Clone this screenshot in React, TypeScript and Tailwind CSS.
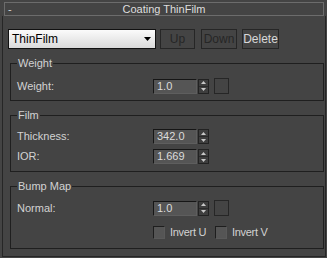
import React from 'react';

const Spinner: React.FC<{ value: string }> = ({ value }) => (
  <div className="flex items-center">
    <div className="h-[15px] w-[44px] border border-[#161616] border-r-[#5e5e5e] border-b-[#5e5e5e] bg-[#555555] pl-[3px] leading-[13px] text-[#dcdcdc]">
      {value}
    </div>
    <div className="ml-[1px] flex h-[15px] w-[11px] flex-col border border-[#222222] bg-[#3e3e3e]">
      <div className="flex flex-1 items-center justify-center border-b border-[#2a2a2a]">
        <svg width="5" height="3" viewBox="0 0 5 3">
          <path d="M0 3 L2.5 0 L5 3 Z" fill="#c8c8c8" />
        </svg>
      </div>
      <div className="flex flex-1 items-center justify-center">
        <svg width="5" height="3" viewBox="0 0 5 3">
          <path d="M0 0 L2.5 3 L5 0 Z" fill="#c8c8c8" />
        </svg>
      </div>
    </div>
  </div>
);

const MapButton: React.FC = () => (
  <div className="ml-[5px] h-[16px] w-[15px] border border-[#262626] bg-[#444444]" />
);

const Check: React.FC<{ label: string; className?: string }> = ({ label, className }) => (
  <div className={`flex items-center ${className ?? ''}`}>
    <div className="h-[13px] w-[12px] border border-[#1e1e1e] border-r-[#5a5a5a] border-b-[#5a5a5a] bg-[#555555]" />
    <span className="ml-[5px] tracking-[-0.3px]">{label}</span>
  </div>
);

const App: React.FC = () => {
  return (
    <div
      className="h-[258px] w-[327px] bg-[#444444] pt-[2px] text-[11px] leading-[13px] text-[#d2d2d2]"
      style={{ fontFamily: '"Liberation Sans", Arial, sans-serif' }}
    >
      {/* rollout title */}
      <div className="ml-[4px] flex h-[14px] w-[320px] items-center border border-[#6c6c6c] bg-[#444444]">
        <span className="ml-[3px] w-[10px] leading-[11px]">-</span>
        <span className="flex-1 pr-[13px] text-center text-[#dedede]">Coating ThinFilm</span>
      </div>

      <div className="ml-[2px] h-[241px] w-[324px] border-x border-b border-[#262626] pl-[5px] pt-[13px]">
        {/* coating list */}
        <div className="flex h-[20px] items-stretch">
          <div className="flex w-[148px] items-center border border-[#111111] bg-gradient-to-b from-[#fbfbfb] to-[#dadada] pl-[3px] pr-[4px] text-[12px] text-black">
            <span className="flex-1">ThinFilm</span>
            <svg width="7" height="4" viewBox="0 0 7 4">
              <path d="M0 0 L7 0 L3.5 4 Z" fill="#000" />
            </svg>
          </div>
          <div className="ml-[4px] flex w-[35px] items-center justify-center border border-[#262626] text-[12px] text-[#262626]">
            Up
          </div>
          <div className="ml-[6px] flex w-[36px] items-center justify-center border border-[#262626] text-[12px] text-[#262626]">
            Down
          </div>
          <div className="ml-[5px] flex w-[37px] items-center justify-center border border-[#262626] text-[12px] text-[#d8d8d8]">
            Delete
          </div>
        </div>

        {/* Weight */}
        <fieldset className="ml-[2px] mt-[8px] w-[314px] border border-[#1f1f1f] pb-[6px] pl-[6px] pt-[8px]">
          <legend className="px-[1px] leading-[13px]">Weight</legend>
          <div className="flex items-center">
            <span className="w-[136px]">Weight:</span>
            <Spinner value="1.0" />
            <MapButton />
          </div>
        </fieldset>

        {/* Film */}
        <fieldset className="ml-[2px] mt-[8px] w-[314px] border border-[#1f1f1f] pb-[7px] pl-[6px] pt-[7px]">
          <legend className="px-[1px] leading-[13px]">Film</legend>
          <div className="flex flex-col gap-[5px]">
            <div className="flex items-center">
              <span className="w-[136px]">Thickness:</span>
              <Spinner value="342.0" />
            </div>
            <div className="flex items-center">
              <span className="w-[136px]">IOR:</span>
              <Spinner value="1.669" />
            </div>
          </div>
        </fieldset>

        {/* Bump Map */}
        <fieldset className="ml-[2px] mt-[8px] w-[314px] border border-[#1f1f1f] pb-[9px] pl-[6px] pt-[7px]">
          <legend className="px-[1px] leading-[13px]">Bump Map</legend>
          <div className="flex items-center">
            <span className="w-[136px]">Normal:</span>
            <Spinner value="1.0" />
            <MapButton />
          </div>
          <div className="ml-[136px] mt-[10px] flex items-center">
            <Check label="Invert U" className="w-[62px]" />
            <Check label="Invert V" />
          </div>
        </fieldset>
      </div>
    </div>
  );
};

export default App;
